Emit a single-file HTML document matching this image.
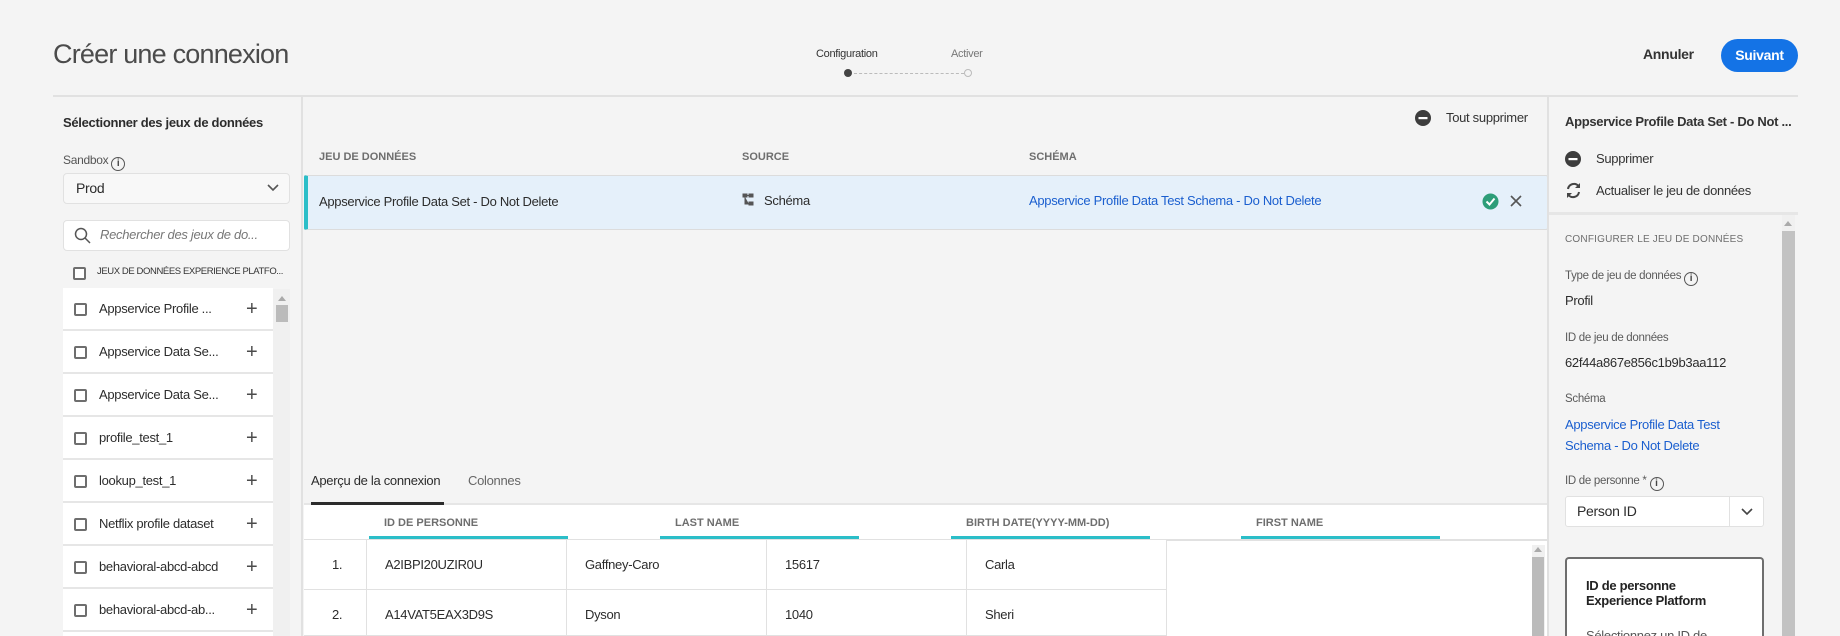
<!DOCTYPE html>
<html style="width:1840px;height:636px;overflow:hidden"><head><meta charset="utf-8"><style>
*{box-sizing:border-box;margin:0;padding:0}
body{width:1840px;height:636px;overflow:hidden;background:#f4f4f4;font-family:"Liberation Sans",sans-serif;color:#2c2c2c;position:relative;font-size:13px;letter-spacing:-0.3px}
.a{position:absolute;white-space:nowrap}
.cb{position:absolute;width:13px;height:13px;border:2px solid #6e6e6e;border-radius:2px;background:#fff}
.plus{position:absolute;font-size:20px;color:#4b4b4b;line-height:20px}
.item{position:absolute;left:63px;width:210px;height:43px;background:#fff;border-bottom:2px solid #e6e6e6}
.item .t{position:absolute;left:36px;top:13px;font-size:13px;color:#2c2c2c}
.item .cb{left:11px;top:15px}
.item .plus{left:183px;top:11px}
.th{position:absolute;font-size:11px;font-weight:bold;color:#6e6e6e;letter-spacing:0}
.bar{position:absolute;top:536px;height:4px;background:#2bbec8;width:199px}
.cell{position:absolute;height:50px;border-right:1.5px solid #e1e1e1;border-bottom:1.5px solid #e1e1e1;background:#fff;font-size:13px;padding:17px 0 0 18px}
.lbl{position:absolute;left:1565px;font-size:11.5px;color:#5a5a5a}
.val{position:absolute;left:1565px;font-size:13px;color:#2c2c2c}
.info{display:inline-block;width:14px;height:14px;border:1.3px solid #555;border-radius:50%;font-size:10px;text-align:center;line-height:12px;font-weight:bold;margin-left:3px;vertical-align:-2px;color:#444;letter-spacing:0}
</style></head><body>
<div class="a" style="left:53px;top:39px;font-size:27px;color:#4b4b4b;font-weight:300;letter-spacing:-0.8px">Créer une connexion</div>
<div class="a" style="left:816px;top:48px;font-size:11px;color:#333">Configuration</div>
<div class="a" style="left:951px;top:48px;font-size:11px;color:#777">Activer</div>
<div class="a" style="left:844px;top:69px;width:8px;height:8px;border-radius:50%;background:#444"></div>
<div class="a" style="left:854px;top:72.5px;width:110px;border-top:1.5px dashed #bbb"></div>
<div class="a" style="left:964px;top:69px;width:8px;height:8px;border-radius:50%;border:1.5px solid #bbb"></div>
<div class="a" style="left:1643px;top:46px;font-size:14px;font-weight:bold;color:#333">Annuler</div>
<div class="a" style="left:1721px;top:39px;width:77px;height:33px;border-radius:17px;background:#1473e6;color:#fff;font-size:14px;font-weight:bold;text-align:center;line-height:33px">Suivant</div>
<div class="a" style="left:53px;top:95px;width:1745px;height:2px;background:#e1e1e1"></div>
<div class="a" style="left:301px;top:97px;width:2px;height:539px;background:#e1e1e1"></div>
<div class="a" style="left:63px;top:115px;font-size:13px;font-weight:bold;color:#2c2c2c">Sélectionner des jeux de données</div>
<div class="a" style="left:63px;top:153px;font-size:12px;color:#555">Sandbox<span class="info">i</span></div>
<div class="a" style="left:63px;top:173px;width:227px;height:31px;background:#f8f8f8;border:1px solid #e1e1e1;border-radius:4px"></div>
<div class="a" style="left:76px;top:180px;font-size:14px">Prod</div>
<svg class="a" style="left:267px;top:184px" width="12" height="8"><path d="M1 1l5 5 5-5" fill="none" stroke="#555" stroke-width="1.6"/></svg>
<div class="a" style="left:63px;top:220px;width:227px;height:31px;background:#fff;border:1px solid #e1e1e1;border-radius:4px"></div>
<svg class="a" style="left:74px;top:227px" width="18" height="18"><circle cx="7" cy="7" r="5.5" fill="none" stroke="#555" stroke-width="1.5"/><path d="M11 11l5 5" stroke="#555" stroke-width="1.5"/></svg>
<div class="a" style="left:100px;top:227px;font-size:13px;font-style:italic;color:#777">Rechercher des jeux de do...</div>
<div class="cb" style="left:73px;top:267px"></div>
<div class="a" style="left:97px;top:266px;font-size:9.5px;color:#333;letter-spacing:-0.4px">JEUX DE DONNÉES EXPERIENCE PLATFO...</div>
<div class="a" style="left:273px;top:289px;width:17px;height:347px;background:#f0f0f0"></div>
<div class="a" style="left:278px;top:296px;border:4px solid transparent;border-bottom:5px solid #aaa;border-top:0"></div>
<div class="a" style="left:276px;top:305px;width:12px;height:17px;background:#bbb"></div>
<div class="item" style="top:288px"><div class="cb"></div><div class="t">Appservice Profile ...</div><div class="plus">+</div></div>
<div class="item" style="top:331px"><div class="cb"></div><div class="t">Appservice Data Se...</div><div class="plus">+</div></div>
<div class="item" style="top:374px"><div class="cb"></div><div class="t">Appservice Data Se...</div><div class="plus">+</div></div>
<div class="item" style="top:417px"><div class="cb"></div><div class="t">profile_test_1</div><div class="plus">+</div></div>
<div class="item" style="top:460px"><div class="cb"></div><div class="t">lookup_test_1</div><div class="plus">+</div></div>
<div class="item" style="top:503px"><div class="cb"></div><div class="t">Netflix profile dataset</div><div class="plus">+</div></div>
<div class="item" style="top:546px"><div class="cb"></div><div class="t">behavioral-abcd-abcd</div><div class="plus">+</div></div>
<div class="item" style="top:589px"><div class="cb"></div><div class="t">behavioral-abcd-ab...</div><div class="plus">+</div></div>
<div class="item" style="top:632px;height:4px;border:0"></div>
<svg class="a" style="left:1415px;top:110px" width="16" height="16"><circle cx="8" cy="8" r="8" fill="#3d3d3d"/><rect x="3.5" y="7" width="9" height="2.2" fill="#fff"/></svg>
<div class="a" style="left:1446px;top:110px;font-size:13px;color:#333">Tout supprimer</div>
<div class="th" style="left:319px;top:151px">JEU DE DONNÉES</div>
<div class="th" style="left:742px;top:151px">SOURCE</div>
<div class="th" style="left:1029px;top:151px">SCHÉMA</div>
<div class="a" style="left:304px;top:175px;width:1244px;height:55px;background:#e5f0fa;border:1px solid #dcdcdc;border-left:4px solid #2bbec8;border-radius:2px"></div>
<div class="a" style="left:319px;top:194px;font-size:13px">Appservice Profile Data Set - Do Not Delete</div>
<svg class="a" style="left:742px;top:193px" width="12" height="13"><path d="M1 1h4v3H1zM7 9h4v3H7zM7 1h4v3H7zM3 4v7h4M5 2.5h2" fill="#555" stroke="#555" stroke-width="1"/></svg>
<div class="a" style="left:764px;top:193px;font-size:13px">Schéma</div>
<div class="a" style="left:1029px;top:193px;font-size:13px;color:#1b5fcf">Appservice Profile Data Test Schema - Do Not Delete</div>
<svg class="a" style="left:1482px;top:193px" width="17" height="17"><circle cx="8.5" cy="8.5" r="8" fill="#2d9d78"/><path d="M4.5 8.5l3 3 5-6" fill="none" stroke="#fff" stroke-width="2"/></svg>
<svg class="a" style="left:1510px;top:195px" width="12" height="12"><path d="M1 1l10 10M11 1L1 11" stroke="#555" stroke-width="1.6"/></svg>
<div class="a" style="left:311px;top:473px;font-size:13px;color:#2c2c2c">Aperçu de la connexion</div>
<div class="a" style="left:468px;top:473px;font-size:13px;color:#666">Colonnes</div>
<div class="a" style="left:304px;top:503px;width:1244px;height:2px;background:#e6e6e6"></div>
<div class="a" style="left:311px;top:502px;width:133px;height:3px;background:#2c2c2c"></div>
<div class="a" style="left:304px;top:505px;width:1244px;height:131px;background:#fff"></div>
<div class="th" style="left:384px;top:517px">ID DE PERSONNE</div>
<div class="th" style="left:675px;top:517px">LAST NAME</div>
<div class="th" style="left:966px;top:517px">BIRTH DATE(YYYY-MM-DD)</div>
<div class="th" style="left:1256px;top:517px">FIRST NAME</div>
<div class="bar" style="left:369px"></div><div class="bar" style="left:660px"></div><div class="bar" style="left:951px"></div><div class="bar" style="left:1241px"></div>
<div class="a" style="left:304px;top:539px;width:1244px;height:1.5px;background:#e1e1e1"></div>
<div class="cell" style="left:304px;top:540px;width:63px;padding-left:28px">1.</div>
<div class="cell" style="left:367px;top:540px;width:200px">A2IBPI20UZIR0U</div>
<div class="cell" style="left:567px;top:540px;width:200px">Gaffney-Caro</div>
<div class="cell" style="left:767px;top:540px;width:200px">15617</div>
<div class="cell" style="left:967px;top:540px;width:200px">Carla</div>
<div class="cell" style="left:304px;top:590px;width:63px;padding-left:28px;height:46px">2.</div>
<div class="cell" style="left:367px;top:590px;width:200px;height:46px">A14VAT5EAX3D9S</div>
<div class="cell" style="left:567px;top:590px;width:200px;height:46px">Dyson</div>
<div class="cell" style="left:767px;top:590px;width:200px;height:46px">1040</div>
<div class="cell" style="left:967px;top:590px;width:200px;height:46px">Sheri</div>
<div class="a" style="left:1532px;top:545px;width:13px;height:91px;background:#f0f0f0"></div>
<div class="a" style="left:1534px;top:547px;border:4px solid transparent;border-bottom:5px solid #aaa;border-top:0"></div>
<div class="a" style="left:1532px;top:557px;width:12px;height:79px;background:#bbb"></div>
<div class="a" style="left:1547px;top:97px;width:2px;height:539px;background:#e1e1e1"></div>
<div class="a" style="left:1565px;top:114px;font-size:13px;font-weight:bold;color:#333">Appservice Profile Data Set - Do Not ...</div>
<svg class="a" style="left:1565px;top:151px" width="16" height="16"><circle cx="8" cy="8" r="8" fill="#3d3d3d"/><rect x="3.5" y="7" width="9" height="2.2" fill="#fff"/></svg>
<div class="a" style="left:1596px;top:151px;font-size:13px;color:#333">Supprimer</div>
<svg class="a" style="left:1565px;top:182px" width="17" height="17"><path d="M3 7a6 6 0 0 1 10.5-3M14 10a6 6 0 0 1-10.5 3" fill="none" stroke="#444" stroke-width="2"/><path d="M15 1v5h-5zM2 16v-5h5z" fill="#444"/></svg>
<div class="a" style="left:1596px;top:183px;font-size:13px;color:#333">Actualiser le jeu de données</div>
<div class="a" style="left:1549px;top:212px;width:249px;height:3px;background:#e6e6e6"></div>
<div class="a" style="left:1782px;top:215px;width:13px;height:421px;background:#f0f0f0"></div>
<div class="a" style="left:1784px;top:221px;border:4px solid transparent;border-bottom:5px solid #aaa;border-top:0"></div>
<div class="a" style="left:1782px;top:231px;width:13px;height:405px;background:#c2c2c2"></div>
<div class="lbl" style="top:234px;font-size:10px;letter-spacing:0.2px;color:#6e6e6e">CONFIGURER LE JEU DE DONNÉES</div>
<div class="lbl" style="top:270px">Type de jeu de données<span class="info">i</span></div>
<div class="val" style="top:293px">Profil</div>
<div class="lbl" style="top:332px">ID de jeu de données</div>
<div class="val" style="top:355px">62f44a867e856c1b9b3aa112</div>
<div class="lbl" style="top:393px">Schéma</div>
<div class="val" style="top:414px;color:#1b5fcf;line-height:21px;white-space:normal;width:180px">Appservice Profile Data Test Schema - Do Not Delete</div>
<div class="lbl" style="top:475px">ID de personne *<span class="info">i</span></div>
<div class="a" style="left:1565px;top:496px;width:199px;height:31px;background:#fff;border:1px solid #e1e1e1;border-radius:3px"></div>
<div class="a" style="left:1729px;top:497px;width:1px;height:29px;background:#e1e1e1"></div>
<div class="a" style="left:1577px;top:503px;font-size:14px">Person ID</div>
<svg class="a" style="left:1741px;top:508px" width="12" height="8"><path d="M1 1l5 5 5-5" fill="none" stroke="#444" stroke-width="1.6"/></svg>
<div class="a" style="left:1565px;top:557px;width:199px;height:79px;background:#fff;border:2px solid #6e6e6e;border-bottom:0;border-radius:4px 4px 0 0;overflow:hidden"></div>
<div class="a" style="left:1586px;top:578px;font-size:13px;font-weight:bold;line-height:15px;color:#222">ID de personne<br>Experience Platform</div>
<div class="a" style="left:1586px;top:628px;font-size:13px;color:#555;height:8px;overflow:hidden">Sélectionnez un ID de</div>
</body></html>
